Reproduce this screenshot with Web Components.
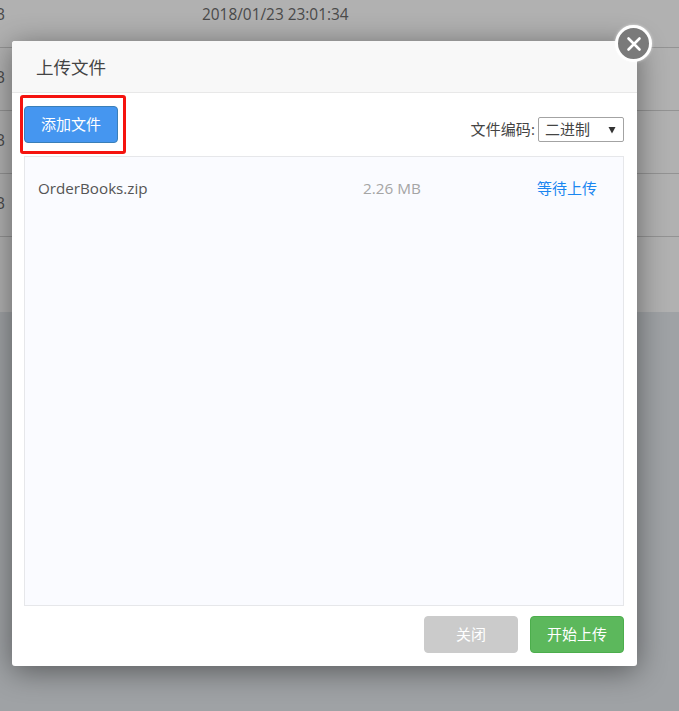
<!DOCTYPE html>
<html><head><meta charset="utf-8">
<style>
html,body{margin:0;padding:0;width:679px;height:711px;overflow:hidden;background:#9fa2a5}
</style></head><body>
<upload-page></upload-page>
<script>
const FONT='"Open Sans","Noto Sans CJK SC",sans-serif';
function def(name,css,html){
  customElements.define(name,class extends HTMLElement{
    constructor(){super();const r=this.attachShadow({mode:'open'});r.innerHTML='<style>'+css+'</style>'+html;}
  });
}
def('bg-row',`:host{display:block;height:63px;box-sizing:border-box;border-bottom:1px solid #939393;position:relative;font:15.4px/20px ${FONT};color:#4a4a4a}
.a{position:absolute;left:-5px;top:20px}.b{position:absolute;left:202px;top:20px}`,
`<span class="a">B</span><span class="b"><slot></slot></span>`);
def('file-row',`:host{display:grid;grid-template-columns:325px 1fr auto;align-items:center;height:20px;padding:21px 26px 0 13px;font:15px/20px ${FONT};color:#555}
.n{font-size:15.2px}.s{color:#a5a5a5;font-size:15.3px}.st{color:#1a86f0}`,
`<span class="n"><slot name="n"></slot></span><span class="s"><slot name="s"></slot></span><span class="st"><slot name="st"></slot></span>`);
def('ui-btn',`:host{display:inline-flex;align-items:center;justify-content:center;box-sizing:border-box;width:94px;height:37px;padding-bottom:2px;border-radius:4px;font:15px/20px ${FONT};color:#fff;background:var(--bg);border:1px solid var(--bd)}`,`<slot></slot>`);
def('close-x',`:host{position:absolute;left:615px;top:25px;width:37px;height:37px;box-sizing:border-box;border-radius:50%;background:#7a7a7a;border:3px solid #fff;display:flex;align-items:center;justify-content:center;box-shadow:0 0 3px rgba(255,255,255,.6)}`,
`<svg width="16" height="16" viewBox="0 0 16 16"><path d="M2.5 2.5L13.5 13.5M13.5 2.5L2.5 13.5" stroke="#fff" stroke-width="2.6" stroke-linecap="round"/></svg>`);
def('fake-select',`:host{display:flex;align-items:center;justify-content:space-between;box-sizing:border-box;width:86px;height:25px;padding:0 7px 2px 6px;border:1px solid #a3a3a3;border-radius:2px;background:#fff;font:15px/20px ${FONT};color:#444}
svg{display:block;margin-top:2px}`,`<slot></slot><svg width="8" height="8" viewBox="0 0 8 8"><path d="M0.5 1H7.5L4 7.5Z" fill="#333"/></svg>`);
def('upload-modal',`:host{position:absolute;left:12px;top:41px;width:625px;height:625px;background:#fff;border-radius:3px;box-shadow:0 5px 30px rgba(0,0,0,.45);display:flex;flex-direction:column;font:15px/20px ${FONT}}
header{height:52px;box-sizing:border-box;background:#f8f8f8;border-bottom:1px solid #e8e8e8;padding:0 24px;display:flex;align-items:center;font-size:17.5px;color:#444;border-radius:3px 3px 0 0}
.body{flex:1;display:flex;flex-direction:column;padding:13px 13px 13px 12px;min-height:0}
.tools{display:flex;justify-content:space-between;align-items:flex-start;height:50px}
.enc{display:flex;align-items:center;gap:3px;margin-top:11px;color:#444}
.enc ::slotted(span){padding-bottom:2px;letter-spacing:.1px}
.list{flex:1;box-sizing:border-box;background:#fafbff;border:1px solid #e6e7ea;min-height:0}
.foot{display:flex;justify-content:flex-end;gap:12px;margin-top:10px}
.mark{position:absolute;left:8px;top:54px;width:106px;height:59px;box-sizing:border-box;border:3px solid #f5130f;border-radius:3px}`,
`<header><slot name="title"></slot></header>
<div class="body">
 <div class="tools"><slot name="add"></slot><div class="enc"><slot name="enc-label"></slot><slot name="enc"></slot></div></div>
 <div class="list"><slot name="list"></slot></div>
 <div class="foot"><slot name="foot"></slot></div>
</div><div class="mark"></div>`);
def('upload-page',`:host{display:block;position:relative;width:679px;height:711px;overflow:hidden;background:#9fa2a5}
.rows{height:312px;background:#b1b1b1;overflow:hidden;display:block}
.top{margin-top:-15px}`,
`<div class="rows"><div class="top">
<bg-row>2018/01/23 23:01:34</bg-row><bg-row></bg-row><bg-row></bg-row><bg-row></bg-row>
</div></div>
<upload-modal>
<span slot="title">上传文件</span>
<ui-btn slot="add" style="--bg:#4596f0;--bd:#3a7fb8">添加文件</ui-btn>
<span slot="enc-label">文件编码:</span>
<fake-select slot="enc">二进制</fake-select>
<file-row slot="list"><span slot="n">OrderBooks.zip</span><span slot="s">2.26 MB</span><span slot="st">等待上传</span></file-row>
<ui-btn slot="foot" style="--bg:#cbcbcb;--bd:#cbcbcb">关闭</ui-btn>
<ui-btn slot="foot" style="--bg:#5cb85c;--bd:#4cae4c">开始上传</ui-btn>
</upload-modal>
<close-x></close-x>`);
</script>
</body></html>
